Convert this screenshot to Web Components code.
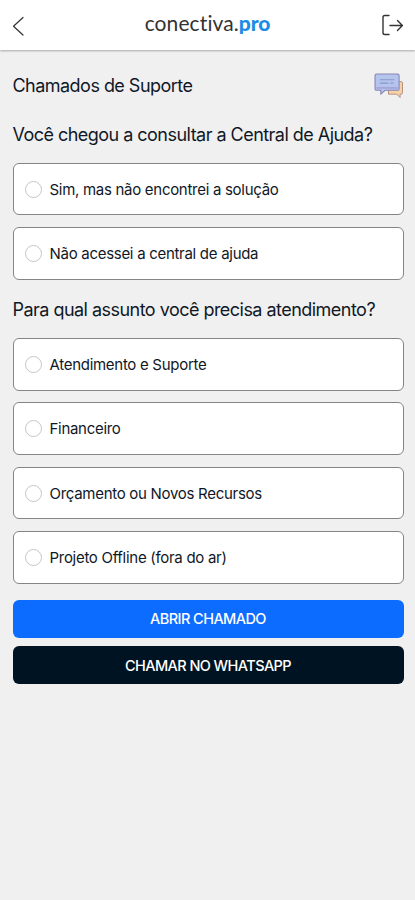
<!DOCTYPE html>
<html lang="pt-BR">
<head>
<meta charset="utf-8">
<meta name="viewport" content="width=device-width, initial-scale=1">
<title>Chamados de Suporte</title>
<style>
html,body{margin:0;height:100%;background:#f0f0f0}
body{font-family:Inter,"Liberation Sans",sans-serif;color:#101827}
</style>
</head>
<body>
<support-app></support-app>
<script>
const define = (name, html) => customElements.define(name, class extends HTMLElement {
  constructor() {
    super();
    const t = document.createElement('template');
    t.innerHTML = html;
    this.attachShadow({ mode: 'open' }).append(t.content.cloneNode(true));
  }
});

define('brand-logo', `
<style>
:host{display:block;font:400 21px/24px Lato,sans-serif;letter-spacing:.1px;color:#333;white-space:nowrap}
b{font-weight:900;color:#1c8de6;letter-spacing:-.1px}
</style><span>conectiva.</span><b>pro</b>`);

define('top-bar', `
<style>
:host{display:grid;grid-template-columns:60px 1fr 60px;align-items:center;height:50px;box-sizing:border-box;background:#fff;box-shadow:0 1px 2px rgba(0,0,0,.3);position:relative}
svg{display:block;fill:none;stroke:#333;stroke-linecap:round;stroke-linejoin:round}
.back{margin-left:12px;margin-top:1px}.exit{justify-self:end;margin-right:11px}
brand-logo{justify-self:center;margin-top:-4px}
</style>
<svg class="back" width="13" height="20" viewBox="0 0 13 20" stroke-width="1.2"><path d="M11 1.500 1.500 10.200 11 19"/></svg>
<brand-logo></brand-logo>
<svg class="exit" width="23" height="22" viewBox="0 0 23 22" stroke-width="1.4"><path d="M8 1.500H3.800Q2 1.500 2 3.300v15.400q0 1.800 1.800 1.800H8M9 11.500h12.300M16.500 6.600l4.900 4.900-4.900 4.900"/></svg>`);

define('chat-icon', `
<style>:host{display:block}svg{display:block}</style>
<svg width="30" height="26" viewBox="0 0 31 27">
<path d="M15 9h13q1.500 0 1.500 1.500v10q0 1.500-1.500 1.500h-1v3.500L23.500 22H15z" fill="#f5d3a4" stroke="#b38d83" stroke-width="1"/>
<path d="M2.500 1h22q1.500 0 1.500 1.500v14q0 1.500-1.500 1.500H11.500L7 22v-4H2.500Q1 18 1 16.500v-14Q1 1 2.500 1z" fill="#b4c4ed" stroke="#8685b4" stroke-width="1.100"/>
<path d="M2.500 15.500h22" stroke="#a7a6d8" stroke-width="2"/>
<path d="M6 7h15M6 10.500h9M17 10.500h3" stroke="#8796c7" stroke-width="1.200"/>
</svg>`);

define('section-title', `
<style>
:host{display:flex;justify-content:space-between;align-items:center;height:26px;font-size:18px;line-height:26px;white-space:nowrap;letter-spacing:-.53px}
</style><slot></slot><slot name="icon"></slot>`);

define('radio-option', `
<style>
:host{display:flex;align-items:center;height:52.5px;box-sizing:border-box;border:1px solid #858585;border-radius:6px;background:#fff;padding-left:11.500px;font-size:15px;line-height:20px;white-space:nowrap;letter-spacing:-.29px}
i{box-sizing:border-box;width:17px;height:17px;border:1px solid #c6c6c6;border-radius:50%;margin-right:7.500px;flex:none}
span{padding-top:1px}
</style><i></i><span><slot></slot></span>`);

define('option-list', `
<style>:host{display:grid;row-gap:11.800px}</style><slot></slot>`);

define('action-button', `
<style>
:host{display:flex;align-items:center;justify-content:center;height:38px;border-radius:6px;background:var(--fill);color:#fff;font-size:14.500px;font-weight:500;letter-spacing:-.57px;white-space:nowrap}
</style><span><slot></slot></span>`);

define('support-app', `
<style>
:host{display:block}
main{padding:22.600px 11.500px 0 12.500px}
.q1{margin-top:23px}
.l1{margin-top:15.300px}
.q2{margin-top:17px}
.l2{margin-top:15.500px}
.actions{display:grid;row-gap:8.500px;margin-top:16px}
</style>
<top-bar></top-bar>
<main>
<section-title>Chamados de Suporte<chat-icon slot="icon"></chat-icon></section-title>
<section-title class="q1">Você chegou a consultar a Central de Ajuda?</section-title>
<option-list class="l1">
<radio-option>Sim, mas não encontrei a solução</radio-option>
<radio-option>Não acessei a central de ajuda</radio-option>
</option-list>
<section-title class="q2">Para qual assunto você precisa atendimento?</section-title>
<option-list class="l2">
<radio-option>Atendimento e Suporte</radio-option>
<radio-option>Financeiro</radio-option>
<radio-option>Orçamento ou Novos Recursos</radio-option>
<radio-option>Projeto Offline (fora do ar)</radio-option>
</option-list>
<div class="actions">
<action-button style="--fill:#0b6cff">ABRIR CHAMADO</action-button>
<action-button style="--fill:#001322">CHAMAR NO WHATSAPP</action-button>
</div>
</main>`);
</script>
</body>
</html>
